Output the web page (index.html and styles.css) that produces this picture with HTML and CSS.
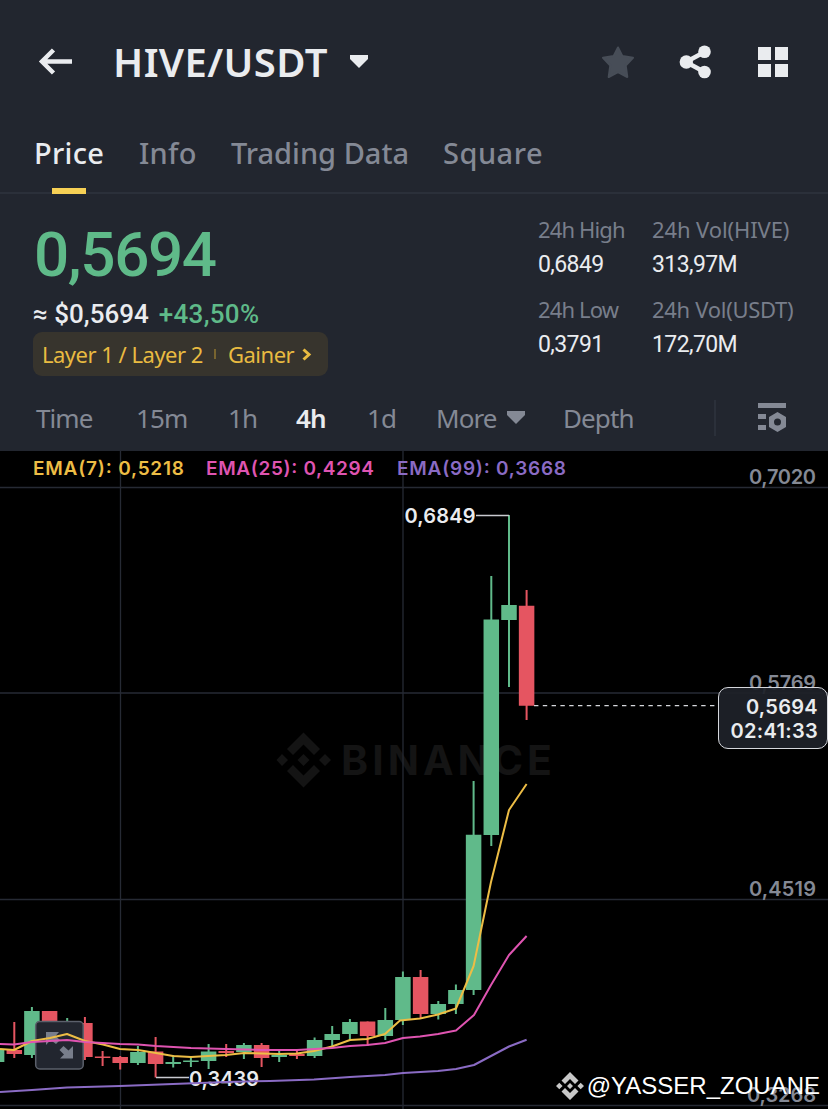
FILE: index.html
```html
<!DOCTYPE html>
<html lang="en">

<head>
    <meta charset="UTF-8">
    <meta name="viewport" content="width=device-width, initial-scale=1.0">
    <title>HIVE/USDT</title>
    <link rel="stylesheet" href="styles.css">
</head>

<body>
    <header class="header">
        <svg class="back-icon" width="34" height="28" viewBox="0 0 34 28">
            <path d="M15.500 2L4 13.500L15.500 25M4 13.500H34" />
        </svg>
        <h1 class="pair">HIVE/USDT</h1>
        <svg class="pair-arrow" width="18" height="14" viewBox="0 0 18 14">
            <path d="M0 0H18V4L9 13L0 4Z" />
        </svg>
        <div class="header-actions">
            <svg width="34" height="34" viewBox="-1 0 34 34">
                <path class="star" d="M17 2.500L21.300 11L32 12.800L24.700 20.500L26.300 32L17 27L7.700 32L9.300 20.500L2 12.800L12.700 11Z" />
            </svg>
            <svg width="34" height="34" viewBox="1.500 0 34 34">
                <path class="share-line" d="M27 7L8.500 17L27 27" />
                <circle class="light" cx="27" cy="6.700" r="6.300" />
                <circle class="light" cx="8.800" cy="17" r="6.700" />
                <circle class="light" cx="27" cy="27" r="6.300" />
            </svg>
            <svg width="30" height="30" viewBox="0 0 30 30">
                <path class="light" d="M0 0H13V13H0ZM17 0H30V13H17ZM0 17H13V30H0ZM17 17H30V30H17Z" />
            </svg>
        </div>
    </header>

    <nav class="tabs">
        <a class="tab active">Price</a>
        <a class="tab">Info</a>
        <a class="tab tab-trading">Trading Data</a>
        <a class="tab tab-square">Square</a>
    </nav>

    <section class="summary">
        <div class="price-box">
            <div class="price">0,5694</div>
            <div class="sub-price">
                <span class="fiat">≈ $0,5694</span>
                <span class="change">+43,50%</span>
            </div>
            <div class="tags">
                <span class="tag-layer">Layer 1 / Layer 2</span>
                <span class="tag-divider"></span>
                <span class="tag-gainer">Gainer</span>
                <svg width="10" height="13" viewBox="0 0 10 13">
                    <path d="M1.500 1.500L7 6.500L1.500 11.500" />
                </svg>
            </div>
        </div>
        <dl class="stats">
            <div class="stat">
                <dt class="label-high">24h High</dt>
                <dd>0,6849</dd>
            </div>
            <div class="stat">
                <dt class="label-hive">24h Vol(HIVE)</dt>
                <dd>313,97M</dd>
            </div>
            <div class="stat">
                <dt class="label-low">24h Low</dt>
                <dd>0,3791</dd>
            </div>
            <div class="stat">
                <dt class="label-usdt">24h Vol(USDT)</dt>
                <dd>172,70M</dd>
            </div>
        </dl>
    </section>

    <div class="intervals">
        <span>Time</span>
        <span>15m</span>
        <span>1h</span>
        <span class="selected">4h</span>
        <span>1d</span>
        <span class="more">More
            <svg width="18" height="14" viewBox="0 0 18 14">
                <path d="M0 0H18V4L9 13L0 4Z" />
            </svg>
        </span>
        <span>Depth</span>
        <div class="settings">
            <svg width="29" height="30" viewBox="0 0 29 30">
                <path d="M0 1H28V6H0ZM0 12H8V17H0ZM0 23H8V28H0Z" />
                <path fill-rule="evenodd" d="M19.500 10L28 15V25L19.500 30L11 25V15ZM19.500 16.500A3.500 3.500 0 1 0 19.500 23.500A3.500 3.500 0 1 0 19.500 16.500Z" />
            </svg>
        </div>
    </div>

    <main class="chart">
        <svg class="chart-canvas" width="828" height="658" viewBox="0 451 828 658">
            <!-- watermark -->
            <g class="watermark">
                <path d="M303.500 732.500L320 749L314 755L303.500 744.500L293 755L287 749ZM303.500 787.500L320 771L314 765L303.500 775.500L293 765L287 771ZM303.500 754L309.500 760L303.500 766L297.500 760ZM282 754L288 760L282 766L276.500 760ZM325 754L331 760L325 766L319 760Z" />
                <text x="341" y="775" textLength="211">BINANCE</text>
            </g>

            <!-- grid -->
            <path class="grid" d="M0 487.500H828M0 693H828M0 899.500H828M0 1105.500H828M120.500 451V1109M403 451V1109" />

            <!-- price axis -->
            <g class="axis">
                <text x="749" y="483.500" textLength="67">0,7020</text>
                <text x="749" y="689.500" textLength="67">0,5769</text>
                <text x="749" y="895.500" textLength="67">0,4519</text>
                <text x="747" y="1101.500" textLength="69">0,3268</text>
            </g>

            <!-- candles -->
            <path class="wick up" d="M509 515V687M491.300 576V846M473.600 781V995M455.900 984.500V1014M438.300 1001V1019.500M402.900 971.500V1025M385.300 1008V1040M349.900 1019V1040M332.200 1026V1048M314.600 1037.500V1058M279.200 1051V1062M243.900 1043V1059M208.600 1044V1069M190.900 1057V1067M173.200 1055V1067.500M137.900 1046V1065M67.200 1018V1040M31.900 1007V1058" />
            <path class="wick down" d="M526.600 590V720M420.600 970V1018M367.600 1021.500V1046M296.900 1050V1059M261.600 1043V1067M226.200 1044V1057M155.600 1037V1077.500M120.200 1056V1069.500M102.600 1051V1066M84.900 1017V1060M49.600 1011V1040M14.300 1022V1058" />
            <path class="body up" d="M509 605V620M491.300 619.500V835M473.600 834.700V990M455.900 990V1004M438.300 1004V1014M402.900 977V1020M385.300 1020V1036M349.900 1022V1034M332.200 1034V1040M314.600 1040V1056M279.200 1055V1057M243.900 1045V1052M208.600 1051.500V1061M190.900 1060.500V1062M173.200 1062V1064M137.900 1052V1063M31.900 1011V1055M-3.400 1050V1062" />
            <path class="body down" d="M526.600 605.700V705.700M420.600 977V1014M367.600 1021.500V1036M296.900 1054V1056M261.600 1045V1058M226.200 1051V1053M155.600 1051.500V1064M120.200 1057V1063M102.600 1056.500V1058M84.900 1023V1057M49.600 1011V1040M14.300 1050V1054" />

            <!-- high / low markers -->
            <g class="marker">
                <path d="M476 515.500H509M156 1077.500H189" />
                <text x="404.500" y="523" textLength="71">0,6849</text>
                <text x="189" y="1085.500" textLength="70">0,3439</text>
            </g>

            <!-- current price -->
            <path class="price-line" d="M534 705.700H718" />

            <!-- expand button -->
            <g class="expand">
                <rect x="35.700" y="1021.500" width="47.500" height="47.500" rx="4" />
                <path d="M46 1032H59L55.500 1036L60 1040L56 1044L50.500 1040L46 1045ZM73 1058.500H60L64 1054.500L59.500 1050L63.500 1046L68.500 1050.500L73 1046Z" />
            </g>

            <!-- moving averages -->
            <polyline class="ema ema-99" points="0,1092 32,1090 67,1087.500 120,1086 173,1084 226,1082 270,1081 314,1079.500 350,1077 385,1075 403,1073 438,1071 456,1069 474,1065 491,1056 509,1046.500 526.600,1039.700" />
            <polyline class="ema ema-7" points="0,1049 14,1050 32,1041 50,1038 67,1034 85,1041 103,1044.500 120,1049 138,1050 156,1053 173,1056 191,1057 208,1056 226,1055 244,1053 262,1053.500 279,1054 297,1053.500 314,1051 332,1046.500 350,1040 367,1039 385,1034 400,1020.500 420,1018.500 438,1014.500 456,1008.500 473.600,966 491,882 509,810 526.600,784" />
            <polyline class="ema ema-25" points="0,1044 14,1044.500 32,1042 67,1040 85,1042 120,1044 138,1044.500 156,1046 191,1048 226,1049 262,1050 297,1050 332,1048 350,1046 367,1045 385,1043 403,1038 420,1036.500 438,1034 456,1030.500 474,1015 491,985 509,955 526.600,936" />

            <g class="legend">
                <text class="legend-7" x="33" y="475" textLength="151">EMA(7): 0,5218</text>
                <text class="legend-25" x="206" y="475" textLength="168">EMA(25): 0,4294</text>
                <text class="legend-99" x="397" y="475" textLength="169">EMA(99): 0,3668</text>
            </g>
        </svg>

        <div class="countdown">
            <span>0,5694</span>
            <span>02:41:33</span>
        </div>

        <div class="author">
            <svg width="28" height="28" viewBox="0 0 28 28">
                <path d="M14 0L22.500 8.500L19 12L14 7L9 12L5.500 8.500ZM14 28L22.500 19.500L19 16L14 21L9 16L5.500 19.500ZM14 11L17 14L14 17L11 14ZM3.300 10.700L6.600 14L3.300 17.300L0 14ZM24.700 10.700L28 14L24.700 17.300L21.400 14Z" />
            </svg>
            <span>@YASSER_ZOUANE</span>
        </div>
    </main>
</body>

</html>
```
FILE: styles.css
```css
/* Reset */
* {
    margin: 0;
    padding: 0;
    box-sizing: border-box;
}

body {
    width: 828px;
    height: 1109px;
    background: #22262f;
    color: #eaecef;
    font-family: "Noto Sans", sans-serif;
    overflow: hidden;
}

svg {
    display: block;
    flex: none;
}

/* Header */
.header {
    display: flex;
    align-items: center;
    height: 124px;
    padding: 0 40px 0 38px;
}

.back-icon path {
    fill: none;
    stroke: #eaecef;
    stroke-width: 4.5;
}

.pair {
    width: 213px;
    margin-left: 41px;
    font-size: 40px;
    font-weight: 600;
    line-height: 54px;
    letter-spacing: 0.4px;
    white-space: nowrap;
}

.pair-arrow {
    margin-left: 24px;
    fill: #eaecef;
}

.header-actions {
    display: flex;
    align-items: center;
    gap: 45px;
    margin-left: auto;
}

.star {
    fill: #474d57;
    stroke: #474d57;
    stroke-width: 2;
    stroke-linejoin: round;
}

.light {
    fill: #eaecef;
}

.share-line {
    fill: none;
    stroke: #eaecef;
    stroke-width: 4.5;
}

/* Tabs */
.tabs {
    display: grid;
    grid-template-columns: 105px 92px 212px 1fr;
    height: 70px;
    padding-left: 34px;
    border-bottom: 2px solid #2b303a;
}

.tab {
    position: relative;
    justify-self: start;
    padding-top: 9px;
    color: #848995;
    font-size: 29px;
    font-weight: 500;
    line-height: 40px;
    letter-spacing: 0.3px;
    white-space: nowrap;
}

.tab-trading {
    letter-spacing: 0;
}

.tab-square {
    letter-spacing: 0.5px;
}

.tab.active {
    color: #eaecef;
}

.tab.active::after {
    content: "";
    position: absolute;
    bottom: -2px;
    left: 18px;
    width: 34px;
    height: 6px;
    background: #f6d055;
}

/* Price summary */
.summary {
    display: flex;
    justify-content: space-between;
    height: 192px;
    padding: 22px 28px 0 33px;
}

.price {
    height: 82px;
    padding-left: 1px;
    color: #5fba89;
    font-family: Roboto, sans-serif;
    font-size: 62px;
    font-weight: 500;
    line-height: 78px;
    letter-spacing: -1.4px;
}

.sub-price {
    display: flex;
    gap: 10px;
    height: 34px;
    font-family: Roboto, sans-serif;
    font-size: 26px;
    font-weight: 500;
    line-height: 32px;
    white-space: nowrap;
}

.change {
    color: #5fba89;
    letter-spacing: 0.3px;
}

.tags {
    display: flex;
    align-items: center;
    width: 295px;
    height: 44px;
    padding-left: 9px;
    border-radius: 9px;
    background: #37342d;
    color: #e9bb41;
    font-size: 22px;
    letter-spacing: -0.5px;
    white-space: nowrap;
}

.tag-layer {
    width: 161px;
}

.tag-divider {
    width: 2px;
    height: 10px;
    margin: 0 12px 0 11px;
    background: #78642f;
}

.tag-gainer {
    width: 66px;
    margin-right: 8px;
}

.tags path {
    fill: none;
    stroke: #e9bb41;
    stroke-width: 3;
}

.stats {
    display: grid;
    grid-template-columns: 114px 148px;
    grid-auto-rows: 80px;
    margin-top: -1px;
}

.stat dt {
    color: #787e8b;
    font-size: 22px;
    line-height: 28px;
    white-space: nowrap;
}

.label-high,
.label-low {
    letter-spacing: -0.85px;
}

.label-hive {
    letter-spacing: -0.1px;
}

.label-usdt {
    letter-spacing: -0.3px;
}

.stat dd {
    margin-top: 8px;
    font-family: Roboto, sans-serif;
    font-size: 23px;
    line-height: 28px;
    letter-spacing: -0.6px;
}

/* Intervals */
.intervals {
    display: grid;
    grid-template-columns: 100px 92px 68px 71px 69px 127px 151px 1fr;
    align-items: center;
    height: 65px;
    padding: 0 0 2px 36px;
    color: #848995;
    font-size: 26px;
    letter-spacing: -0.9px;
    white-space: nowrap;
}

.selected {
    color: #eaecef;
    font-weight: 600;
}

.more {
    display: flex;
    align-items: center;
    gap: 10px;
}

.intervals svg {
    fill: #848995;
}

.settings {
    height: 36px;
    padding: 2px 0 0 42px;
    border-left: 2px solid #2b303a;
}

/* Chart */
.chart {
    position: relative;
    height: 658px;
    background: #000;
    font-family: Inter, sans-serif;
}

.watermark {
    fill: #141414;
    font-size: 41px;
    font-weight: 700;
}

.grid {
    fill: none;
    stroke: #262a34;
    stroke-width: 1.3;
}

.axis {
    fill: #848995;
    font-size: 20px;
    font-weight: 600;
}

.wick {
    fill: none;
    stroke-width: 2;
}

.body {
    fill: none;
    stroke-width: 15.5;
}

.up {
    stroke: #60ba8a;
}

.down {
    stroke: #e55561;
}

.marker {
    fill: #eaecef;
    font-size: 20px;
    font-weight: 600;
}

.marker path {
    stroke: #c9cad0;
    stroke-width: 1.3;
}

.price-line {
    stroke: #d5d7dc;
    stroke-width: 1.3;
    stroke-dasharray: 4.4 4.4;
}

.expand rect {
    fill: #22262f;
    stroke: #5b606b;
    stroke-width: 1.5;
}

.expand path {
    fill: #787e8b;
}

.ema {
    fill: none;
    stroke-width: 2;
    stroke-linejoin: round;
}

.ema-7 {
    stroke: #edbd45;
}

.ema-25 {
    stroke: #df54b1;
}

.ema-99 {
    stroke: #8a6bc4;
}

.legend {
    font-size: 19px;
    font-weight: 600;
}

.legend-7 {
    fill: #edbd45;
}

.legend-25 {
    fill: #df54b1;
}

.legend-99 {
    fill: #8a6bc4;
}

/* Current price box over the axis */
.countdown {
    position: absolute;
    top: 236px;
    right: 0;
    display: flex;
    flex-direction: column;
    align-items: flex-end;
    width: 110px;
    height: 62px;
    padding: 7px 9px;
    border: 1.5px solid #d5d7dc;
    border-radius: 10px;
    background: rgba(30, 33, 41, 0.93);
    font-size: 20px;
    font-weight: 600;
    line-height: 24px;
    letter-spacing: 0.3px;
}

.author {
    position: absolute;
    right: 8px;
    bottom: 8px;
    display: flex;
    align-items: center;
    gap: 3px;
    color: #fff;
    font-family: "Liberation Sans", Arial, sans-serif;
    font-size: 24px;
    line-height: 30px;
}

.author svg {
    fill: #c8c8c8;
}
```
